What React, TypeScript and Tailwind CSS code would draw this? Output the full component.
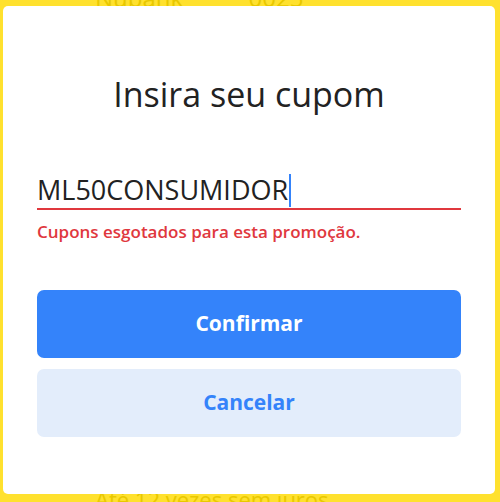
export default function App() {
  return (
    <div
      className="relative h-[502px] w-[500px] overflow-hidden bg-[#ffe12e]"
      style={{ fontFamily: '"Open Sans", "Liberation Sans", sans-serif' }}
    >
      {/* page underneath the modal */}
      <div className="flex flex-col pl-[95px] text-[#e8c800]">
        <p className="-mt-[14px] text-[24px] leading-[24px]">Nubank **** 0025</p>
        <p className="mt-[477px] text-[22px] leading-[24px]">Até 12 vezes sem juros</p>
      </div>

      <div className="absolute left-[3px] top-[6px] flex h-[488px] w-[492px] flex-col rounded-[5px] bg-white px-[34px]">
        <h1 className="mt-[66px] text-center text-[34px] leading-[44px] text-[#222]">
          Insira seu cupom
        </h1>

        <div className="mt-[57px] flex items-center border-b-2 border-[#e0383e] pb-[1px]">
          <span className="text-[27px] leading-[34px] text-[#222]">ML50CONSUMIDOR</span>
          <span className="ml-[1px] h-[33px] w-[2px] bg-[#3483fa]" />
        </div>
        <p className="mt-[11px] text-[17px] font-semibold leading-[22px] text-[#e0383e]">
          Cupons esgotados para esta promoção.
        </p>

        <div className="mt-[47px] flex flex-col gap-[11px]">
          <button className="flex h-[68px] items-center justify-center rounded-[7px] bg-[#3483fa] text-[21px] font-bold text-white">
            Confirmar
          </button>
          <button className="flex h-[68px] items-center justify-center rounded-[7px] bg-[#e3edfb] text-[21px] font-bold text-[#3483fa]">
            Cancelar
          </button>
        </div>
      </div>
    </div>
  )
}
